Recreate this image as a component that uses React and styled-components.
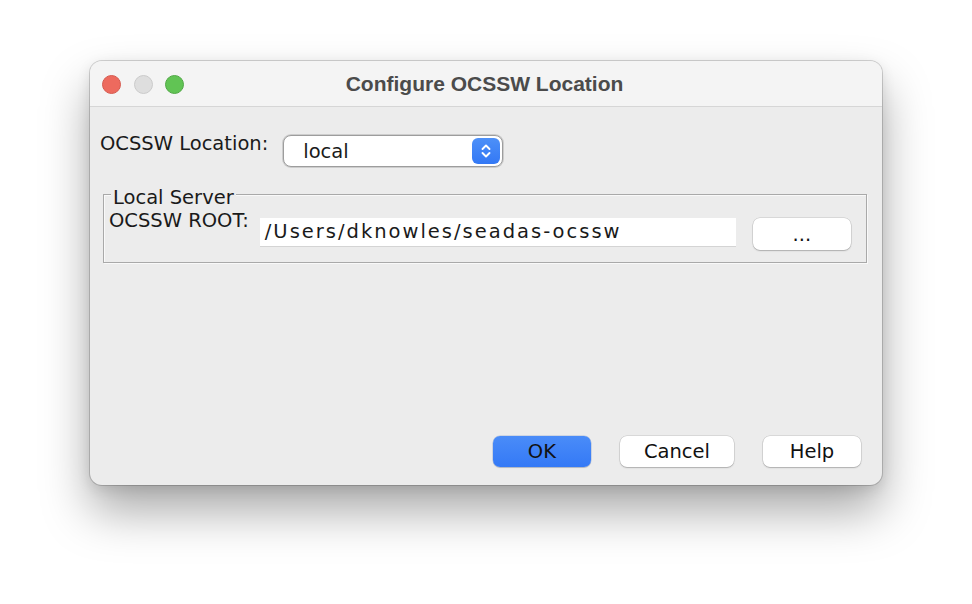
import React from "react";
import styled, { createGlobalStyle } from "styled-components";

const Global = createGlobalStyle`
  html, body {
    margin: 0;
    background: #ffffff;
  }
  body {
    font-family: "DejaVu Sans", "Liberation Sans", sans-serif;
    color: #1a1a1a;
  }
`;

const Page = styled.div`
  padding: 61px 0 0 90px;
  height: 604px;
  box-sizing: border-box;
`;

const Window = styled.div`
  width: 792px;
  height: 424px;
  box-sizing: border-box;
  background: #ececec;
  border-radius: 12px;
  display: flex;
  flex-direction: column;
  overflow: hidden;
  box-shadow: 0 0 0 1px rgba(0, 0, 0, 0.16), 0 26px 48px rgba(0, 0, 0, 0.34),
    0 4px 14px rgba(0, 0, 0, 0.1);
`;

const TitleBar = styled.div`
  height: 45px;
  flex: none;
  display: grid;
  grid-template-columns: 1fr auto 1fr;
  align-items: center;
  padding: 0 12px;
  background: #f4f4f4;
  border-bottom: 1px solid #d6d6d6;
`;

const Lights = styled.div`
  display: flex;
  gap: 12.5px;
  padding-top: 1px;
`;

const Light = styled.span`
  width: 19px;
  height: 19px;
  border-radius: 50%;
  box-sizing: border-box;
  background: ${(p) => p.$color};
  border: 1px solid ${(p) => p.$edge};
`;

const Title = styled.div`
  font-family: "Liberation Sans", Arial, sans-serif;
  font-weight: 700;
  font-size: 21px;
  color: #4b4b4b;
  margin-left: -3px;
`;

const Content = styled.div`
  flex: 1;
  display: flex;
  flex-direction: column;
  padding: 28px 15px 18px 10px;
`;

const Row = styled.div`
  display: flex;
  align-items: flex-start;
`;

const Label = styled.span`
  font-size: 19.5px;
  line-height: 22px;
  margin-top: ${(p) => p.$top || 0}px;
  margin-right: ${(p) => p.$gap || 0}px;
  white-space: nowrap;
`;

const Combo = styled.div`
  width: 220px;
  height: 32px;
  box-sizing: border-box;
  border-radius: 8px;
  background: #ffffff;
  border: 1px solid #9d9d9d;
  box-shadow: 0 0 0 1px #cdcdcd;
  display: flex;
  align-items: center;
  justify-content: space-between;
  padding: 0 2px 0 19px;
  font-size: 19.5px;
`;

const Stepper = styled.span`
  width: 28px;
  height: 26px;
  border-radius: 6px;
  background: linear-gradient(#4d90f8, #3378f5);
  display: grid;
  place-items: center;
`;

const Group = styled.div`
  margin: 27px 0 0 3px;
  border: 1px solid #a9a9a9;
  box-shadow: inset 1px 1px 0 #f9f9f9, 1px 1px 0 #f9f9f9;
  padding: 0 14px 12px 5px;
  display: flex;
  flex-direction: column;
`;

const Legend = styled.span`
  align-self: flex-start;
  margin: -8px 0 0 2px;
  padding: 0 2px 0 2px;
  background: #ececec;
  font-size: 19.5px;
  line-height: 22px;
`;

const PathRow = styled.div`
  display: flex;
  align-items: flex-start;
  margin-top: 1px;
`;

const TextField = styled.div`
  width: 476px;
  height: 29px;
  box-sizing: border-box;
  margin-top: 8px;
  background: #ffffff;
  border-bottom: 1px solid #d4d4d4;
  font-size: 19.5px;
  letter-spacing: 2px;
  line-height: 28px;
  padding-left: 5px;
  white-space: nowrap;
  overflow: hidden;
`;

const Button = styled.button`
  min-width: ${(p) => p.$min || 98}px;
  height: ${(p) => p.$h || 31}px;
  box-sizing: border-box;
  padding: 0 24px;
  border: none;
  border-radius: 7px;
  font-family: "DejaVu Sans", sans-serif;
  font-size: 19.5px;
  color: #111;
  background: ${(p) =>
    p.$primary ? "linear-gradient(#4a8cf8, #3479f6)" : "#ffffff"};
  box-shadow: ${(p) =>
    p.$primary
      ? "0 0 0 0.5px rgba(0,60,160,.25), 0 1px 1px rgba(0,0,0,.15)"
      : "0 0 0 0.5px rgba(0,0,0,.16), 0 1px 1.5px rgba(0,0,0,.2)"};
  margin-top: ${(p) => p.$top || 0}px;
  margin-left: ${(p) => p.$left || 0}px;
`;

const Footer = styled.div`
  margin-top: auto;
  display: flex;
  justify-content: flex-end;
  gap: 29px;
  padding-right: 6px;
`;

function Chevrons() {
  return (
    <svg width="12" height="18" viewBox="0 0 12 18" fill="none">
      <path d="M2.5 7 L6 3.5 L9.5 7" stroke="#fff" strokeWidth="1.9" strokeLinecap="round" strokeLinejoin="round" />
      <path d="M2.5 11 L6 14.5 L9.5 11" stroke="#fff" strokeWidth="1.9" strokeLinecap="round" strokeLinejoin="round" />
    </svg>
  );
}

export default function App() {
  return (
    <Page>
      <Global />
      <Window>
        <TitleBar>
          <Lights>
            <Light $color="#ed6a5e" $edge="#d65a4f" />
            <Light $color="#dedede" $edge="#cbcbcb" />
            <Light $color="#61c454" $edge="#51a846" />
          </Lights>
          <Title>Configure OCSSW Location</Title>
          <span />
        </TitleBar>
        <Content>
          <Row>
            <Label $top={-2} $gap={15}>OCSSW Location:</Label>
            <Combo>
              <span>local</span>
              <Stepper>
                <Chevrons />
              </Stepper>
            </Combo>
          </Row>
          <Group>
            <Legend>Local Server</Legend>
            <PathRow>
              <Label $gap={11}>OCSSW ROOT:</Label>
              <TextField>/Users/dknowles/seadas-ocssw</TextField>
              <Button $h={32} $top={8} $left={17}>...</Button>
            </PathRow>
          </Group>
          <Footer>
            <Button $primary>OK</Button>
            <Button>Cancel</Button>
            <Button>Help</Button>
          </Footer>
        </Content>
      </Window>
    </Page>
  );
}
